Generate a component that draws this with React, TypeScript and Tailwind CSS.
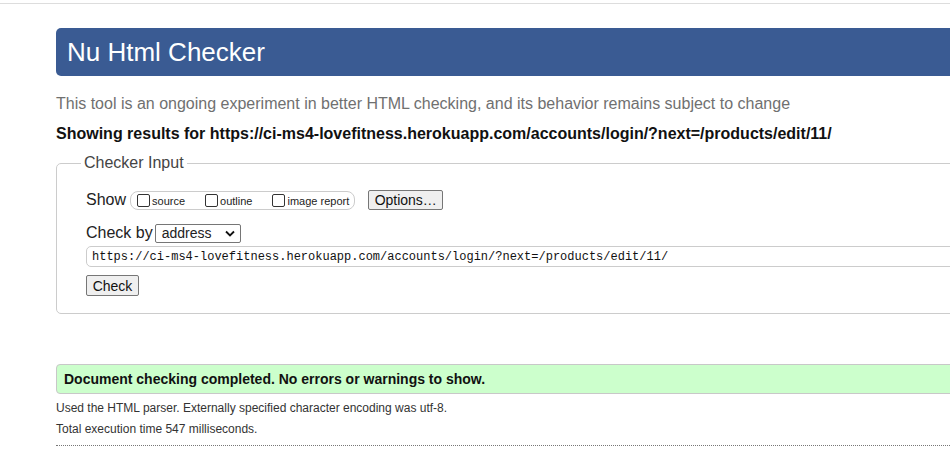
import React from "react";

const url = "https://ci-ms4-lovefitness.herokuapp.com/accounts/login/?next=/products/edit/11/";

const Box = ({ label, gap }: { label: string; gap: string }) => (
  <label className={`flex items-center ${gap}`}>
    <span className="w-[13px] h-[13px] border border-[#333] rounded-[2px] bg-white mr-[2px]" />
    <span className="text-[11px] text-[#222] pt-[2px]">{label}</span>
  </label>
);

const App = () => {
  return (
    <div className="w-[950px] h-[453px] overflow-hidden bg-white font-['Liberation_Sans',Arial,sans-serif] text-[#222]">
      <div className="pt-[3px]">
        <div className="h-px w-full bg-[#dddddd]" />
      </div>
      <div className="pl-[56px] w-[1100px]">
        <h1 className="mt-[24px] h-[48px] flex items-center pl-[11px] bg-[#3a5b93] rounded-l-[5px] text-white text-[26px] leading-none">
          Nu Html Checker
        </h1>
        <p className="mt-[18px] text-[16px] leading-[20px] text-[#707070]">
          This tool is an ongoing experiment in better HTML checking, and its behavior remains subject to change
        </p>
        <p className="mt-[10px] text-[16px] leading-[20px] font-bold text-[#111]">
          Showing results for {url}
        </p>

        <fieldset className="mt-[10px] h-[160px] border border-[#cccccc] rounded-[5px]">
          <legend className="ml-[24px] px-[3px] text-[16px] text-[#444] leading-[18px]">Checker Input</legend>

          <div className="pl-[29px] pt-[18px]">
            <div className="flex items-center h-[20px]">
              <span className="text-[16px] mr-[4px]">Show</span>
              <div className="flex items-center h-[19px] border border-[#cccccc] rounded-[8px] pl-[6px] pr-[5px]">
                <Box label="source" gap="mr-[20px]" />
                <Box label="outline" gap="mr-[20px]" />
                <Box label="image report" gap="" />
              </div>
              <button className="ml-[13px] h-[20px] w-[75px] border border-[#767676] rounded-[2px] bg-[#efefef] text-[14px] leading-none text-[#111]">
                Options…
              </button>
            </div>

            <div className="flex items-center mt-[13px] h-[20px]">
              <span className="text-[16px] mr-[2px]">Check by</span>
              <div className="flex items-center justify-between w-[86px] h-[19px] border border-[#767676] rounded-[2px] pl-[6px] pr-[5px] text-[14px]">
                <span>address</span>
                <svg width="10" height="7" viewBox="0 0 10 7" fill="none">
                  <path d="M1 1.5L5 5.5L9 1.5" stroke="#111" strokeWidth="1.8" />
                </svg>
              </div>
            </div>

            <div className="mt-[3px] h-[21px] flex items-center border border-[#cccccc] rounded-l-[5px] pl-[5px] font-['Liberation_Mono',monospace] text-[12px] text-[#111]">
              {url}
            </div>

            <button className="mt-[8px] h-[21px] w-[53px] border border-[#767676] rounded-[2px] bg-[#efefef] text-[14px] leading-none text-[#111]">
              Check
            </button>
          </div>
        </fieldset>

        <div className="mt-[50px] h-[30px] flex items-center pl-[7px] bg-[#ccffcc] border border-[#c8c8c8] rounded-l-[4px] text-[14px] font-bold text-[#111]">
          Document checking completed. No errors or warnings to show.
        </div>
        <p className="mt-[7px] text-[12px] leading-[15px] text-[#333]">
          Used the HTML parser. Externally specified character encoding was utf-8.
        </p>
        <p className="mt-[6px] text-[12px] leading-[15px] text-[#333]">Total execution time 547 milliseconds.</p>
        <div className="mt-[8px] border-t border-dotted border-[#777]" />
      </div>
    </div>
  );
};

export default App;
